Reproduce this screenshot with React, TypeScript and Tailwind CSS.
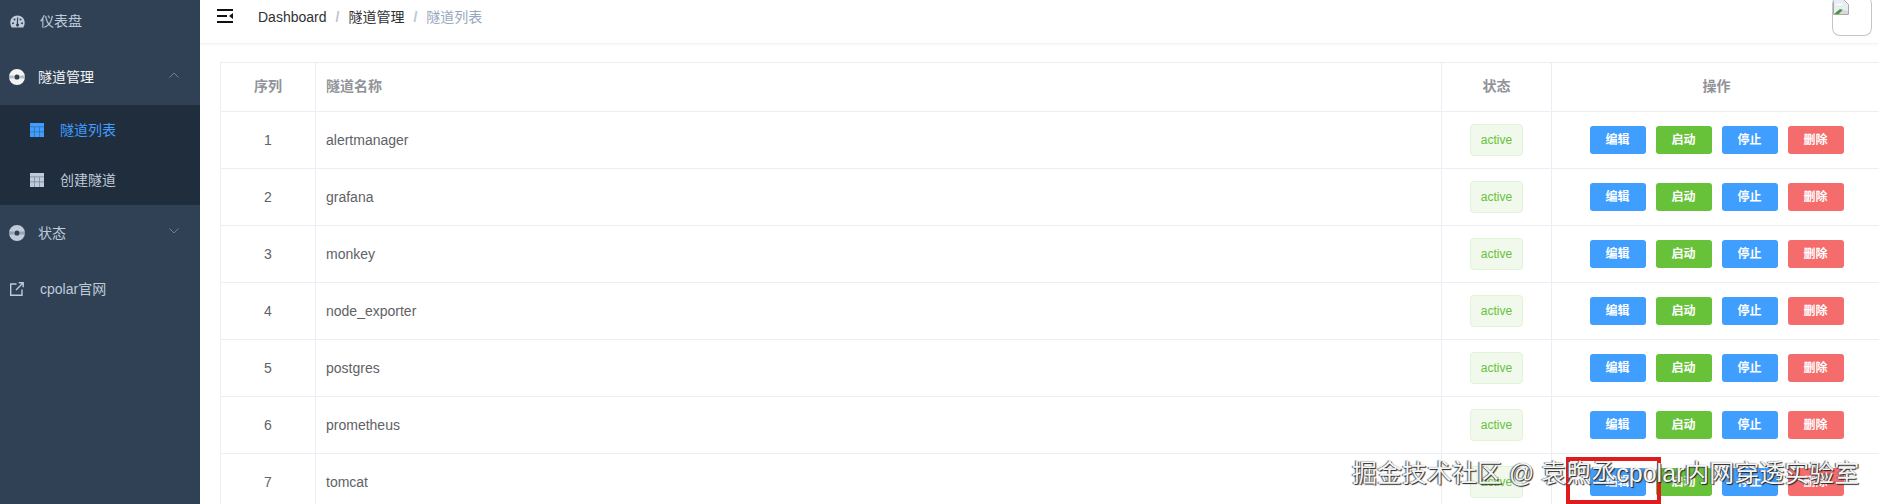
import React from "react";

const FONT = "font-['Liberation_Sans','Noto_Sans_CJK_SC',sans-serif]";

const tunnels = ["alertmanager", "grafana", "monkey", "node_exporter", "postgres", "prometheus", "tomcat"];

const actions = [
  { label: "编辑", color: "bg-[#409eff]" },
  { label: "启动", color: "bg-[#67c23a]" },
  { label: "停止", color: "bg-[#409eff]" },
  { label: "删除", color: "bg-[#f56c6c]" },
];

// Icons drawn by hand, the element-admin set isn't in the icon packages
const DashboardIcon = () => (
  <svg width="15" height="13" viewBox="0 0 15 13" fill="currentColor">
    <path
      fillRule="evenodd"
      d="M7.5 0.5C3.4 0.5 0.3 3.6 0.3 7.6c0 1.9.6 3.5 1.4 4.9h11.6c.8-1.4 1.4-3 1.4-4.9 0-4-3.1-7.1-7.2-7.1zM3 7.2a1 1 0 1 1 0 2 1 1 0 0 1 0-2zm1.5-3.6a1 1 0 1 1 0 2 1 1 0 0 1 0-2zm6 0a1 1 0 1 1 0 2 1 1 0 0 1 0-2zm1.500 3.600a1 1 0 1 1 0 2 1 1 0 0 1 0-2zM8.200 2.400l-.2 6.200a1.500 1.500 0 1 1-1.200.1l.2-6.300z"
    />
  </svg>
);

const RingIcon = () => (
  <svg width="16" height="16" viewBox="0 0 16 16" fill="currentColor">
    <path
      fillRule="evenodd"
      d="M8 0a8 8 0 1 1 0 16A8 8 0 0 1 8 0zm0 5.400a2.600 2.600 0 1 0 0 5.200 2.600 2.600 0 0 0 0-5.200z"
    />
    <path d="M0 6.400h4.800v3.200H0zM11.200 6.400H16v3.200h-4.800z" fill="#304156" opacity="0.3" />
  </svg>
);

const GridIcon = () => (
  <svg width="14" height="14" viewBox="0 0 14 14" fill="currentColor">
    <rect width="14" height="14" opacity="0.55" />
    <path d="M0 0h14v3.600H0zM0 4.300h4.300v4.300H0zM5 4.300h4v4.300H5zM9.700 4.300H14v4.300H9.700zM0 9.300h4.300V14H0zM5 9.300h4V14H5zM9.700 9.300H14V14H9.700z" />
  </svg>
);

const ExternalIcon = () => (
  <svg width="14" height="14" viewBox="0 0 14 14" fill="none" stroke="currentColor" strokeWidth="1.400">
    <path d="M6.500 2H.7v11.300H12V7.500" />
    <path d="M6 8l7-7M8.700.8h4.500v4.500" />
  </svg>
);

const Chevron = ({ up }: { up?: boolean }) => (
  <svg width="10" height="6" viewBox="0 0 10 6" fill="none" stroke="#6f7f92" strokeWidth="1">
    <path d={up ? "M.5 5.500L5 1l4.500 4.500" : "M.5.5L5 5 9.500.5"} />
  </svg>
);

const FoldIcon = () => (
  <svg width="16" height="14" viewBox="0 0 16 14" fill="#111">
    <path d="M0 0h16v2H0zM0 6h10v2H0zM0 12h16v2H0zM16 4v6l-4-3z" />
  </svg>
);

const BrokenImage = () => (
  <svg width="16" height="16" viewBox="0 0 16 16">
    <path d="M.5.5h10l5 5v10H.5z" fill="#e8edf4" stroke="#a9a9a9" />
    <path d="M1 15l6-5 3 1-4 4z" fill="#4a9a3a" />
    <path d="M6 15l4-4 5 1v3z" fill="#d8d8d8" />
    <path d="M2 7c2-3 6-3 8-1H2z" fill="#fff" />
  </svg>
);

const Sidebar = () => (
  <aside className="w-[200px] shrink-0 h-full bg-[#304156] text-[14px] text-[#bfcbd9] overflow-hidden">
    <div className="-mt-[7px]">
      <div className="h-14 flex items-center pl-[10px]">
        <DashboardIcon />
        <span className="ml-[15px]">仪表盘</span>
      </div>
      <div className="h-14 flex items-center pl-[9px] pr-[21px] text-[#f4f4f5]">
        <RingIcon />
        <span className="ml-[13px] flex-1">隧道管理</span>
        <span className="-mt-1">
          <Chevron up />
        </span>
      </div>
      <div className="bg-[#1f2d3d]">
        <div className="h-[50px] flex items-center pl-[30px] text-[#409eff]">
          <GridIcon />
          <span className="ml-[16px]">隧道列表</span>
        </div>
        <div className="h-[50px] flex items-center pl-[30px]">
          <GridIcon />
          <span className="ml-[16px]">创建隧道</span>
        </div>
      </div>
      <div className="h-14 flex items-center pl-[9px] pr-[21px]">
        <RingIcon />
        <span className="ml-[13px] flex-1">状态</span>
        <span className="-mt-1">
          <Chevron />
        </span>
      </div>
      <div className="h-14 flex items-center pl-[10px]">
        <ExternalIcon />
        <span className="ml-[16px]">cpolar官网</span>
      </div>
    </div>
  </aside>
);

const Header = () => (
  <header className="h-11 flex items-start border-b border-[#f4f4f4] shadow-[0_1px_3px_rgba(0,21,41,0.04)] pl-[17px] pr-[7px]">
    <div className="mt-[9px] flex">
      <FoldIcon />
    </div>
    <nav className="ml-[25px] mt-[9px] flex gap-[9px] text-[14px] leading-4 text-[#303133] flex-1">
      <span>Dashboard</span>
      <span className="text-[#c0c4cc] font-bold">/</span>
      <span>隧道管理</span>
      <span className="text-[#c0c4cc] font-bold">/</span>
      <span className="text-[#97a8be]">隧道列表</span>
    </nav>
    <div className="w-10 h-10 -mt-1 rounded-[8px] border border-[#c4c4c4] border-t-0 overflow-hidden">
      <div className="mt-[3px] flex">
        <BrokenImage />
      </div>
    </div>
  </header>
);

const TunnelTable = () => (
  <div className="pt-[18px] pl-5">
    <table className="w-[1662px] table-fixed border-collapse text-[14px] text-[#606266]">
      <colgroup>
        <col className="w-[95px]" />
        <col />
        <col className="w-[110px]" />
        <col className="w-[330px]" />
      </colgroup>
      <thead>
        <tr className="h-[49px] text-[#909399] font-bold">
          <th className="border border-[#ebeef5] font-bold pb-[2px]">序列</th>
          <th className="border border-[#ebeef5] font-bold text-left pl-[10px] pb-[2px]">隧道名称</th>
          <th className="border border-[#ebeef5] font-bold pb-[2px]">状态</th>
          <th className="border border-[#ebeef5] font-bold pb-[2px]">操作</th>
        </tr>
      </thead>
      <tbody>
        {tunnels.map((name, i) => (
          <tr key={name} className="h-[57px]">
            <td className="border border-[#ebeef5] text-center">{i + 1}</td>
            <td className="border border-[#ebeef5] pl-[10px]">{name}</td>
            <td className="border border-[#ebeef5] text-center">
              <span className="inline-flex items-center h-8 px-[10px] rounded border border-[#e1f3d8] bg-[#f0f9eb] text-[12px] text-[#67c23a] align-middle">
                active
              </span>
            </td>
            <td className="border border-[#ebeef5]">
              <div className="flex justify-center gap-[10px]">
                {actions.map((a) => (
                  <button
                    key={a.label}
                    className={`w-14 h-7 rounded-[3px] text-[12px] font-bold text-white ${a.color}`}
                  >
                    {a.label}
                  </button>
                ))}
              </div>
            </td>
          </tr>
        ))}
      </tbody>
    </table>
  </div>
);

export default function App() {
  return (
    <div className={`relative w-[1879px] h-[504px] flex overflow-hidden bg-white ${FONT}`}>
      <Sidebar />
      <main className="flex-1 min-w-0 overflow-hidden">
        <Header />
        <TunnelTable />
      </main>
      {/* annotation box and site watermark burned into the screenshot */}
      <div className="absolute left-[1566px] top-[457px] w-[95px] h-[47px] border-[4px] border-[#e01b1b]" />
      <div className="absolute left-[1352px] top-[457px] text-[25px] leading-8 text-[#f5f5f5] whitespace-nowrap [text-shadow:1px_1px_1px_#222,-1px_0_1px_#555]">
        掘金技术社区 @ 袁煦丞cpolar内网穿透实验室
      </div>
    </div>
  );
}
